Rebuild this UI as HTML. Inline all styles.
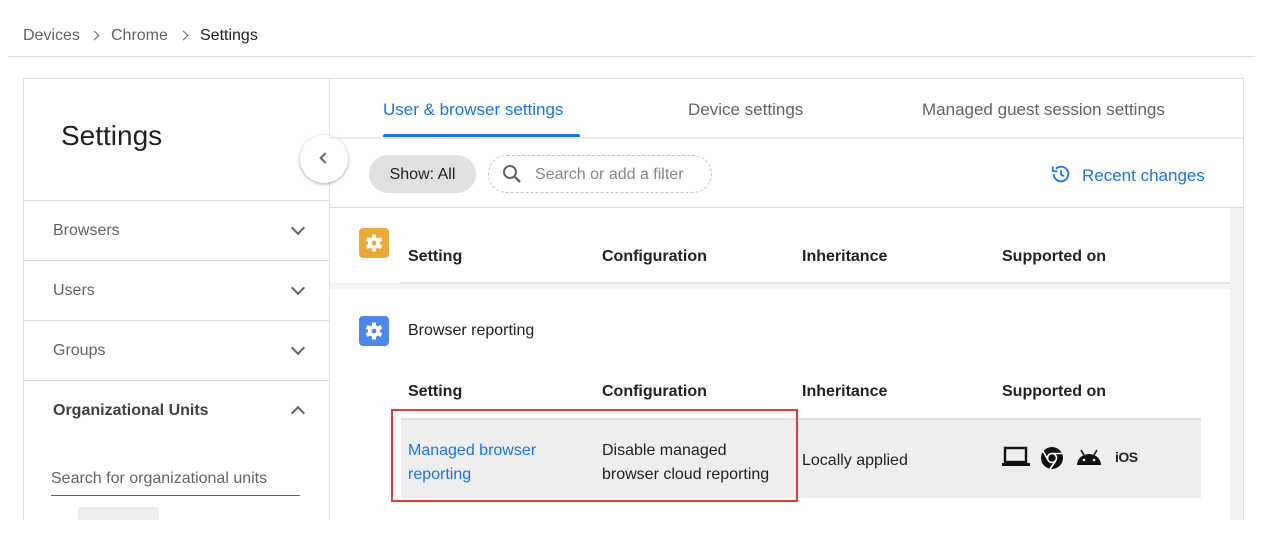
<!DOCTYPE html>
<html><head><style>
*{margin:0;padding:0;box-sizing:border-box}
body{width:1266px;height:542px;background:#fff;font-family:"Liberation Sans",Roboto,sans-serif;color:#202124;position:relative;overflow:hidden}
.a{position:absolute;white-space:nowrap}
.g{color:#5f6368}
.b{font-weight:bold;font-size:16px}
.chev{position:absolute;width:10px;height:10px;border-right:2px solid #5f6368;border-bottom:2px solid #5f6368;transform:rotate(45deg)}
.bc{position:absolute;width:7px;height:7px;border-right:1.5px solid #5f6368;border-bottom:1.5px solid #5f6368;transform:rotate(-45deg)}
</style></head><body>
<div class="a g" style="left:23px;top:27px;font-size:16px">Devices</div>
<div class="bc" style="left:91px;top:32px"></div>
<div class="a g" style="left:111px;top:27px;font-size:16px">Chrome</div>
<div class="bc" style="left:180px;top:32px"></div>
<div class="a" style="left:200px;top:27px;font-size:16px">Settings</div>
<div class="a" style="left:8px;top:56px;width:1247px;height:1px;background:#dadce0"></div>
<div class="a" style="left:23px;top:78px;width:1221px;height:442px;border:1px solid #dadce0;border-bottom:none"></div>
<div class="a" style="left:329px;top:78px;width:1px;height:442px;background:#dadce0"></div>
<div class="a" style="left:61px;top:120px;font-size:28px">Settings</div>
<div class="a" style="left:24px;top:200px;width:305px;height:1px;background:#dadce0"></div>
<div class="a" style="left:24px;top:260px;width:305px;height:1px;background:#dadce0"></div>
<div class="a" style="left:24px;top:320px;width:305px;height:1px;background:#dadce0"></div>
<div class="a" style="left:24px;top:380px;width:305px;height:1px;background:#dadce0"></div>
<div class="a g" style="left:53px;top:222px;font-size:16px">Browsers</div>
<div class="a g" style="left:53px;top:282px;font-size:16px">Users</div>
<div class="a g" style="left:53px;top:342px;font-size:16px">Groups</div>
<div class="a" style="left:53px;top:402px;font-size:16px;color:#3c4043;font-weight:bold">Organizational Units</div>
<div class="chev" style="left:293px;top:223px"></div>
<div class="chev" style="left:293px;top:283px"></div>
<div class="chev" style="left:293px;top:343px"></div>
<div class="chev" style="left:293px;top:408px;transform:rotate(225deg)"></div>
<div class="a g" style="left:51px;top:470px;font-size:16px">Search for organizational units</div>
<div class="a" style="left:51px;top:495px;width:249px;height:1px;background:#5f6368"></div>
<div class="a" style="left:78px;top:507px;width:81px;height:13px;background:#eee;border-radius:3px 3px 0 0"></div>
<div class="a" style="left:300px;top:135px;width:48px;height:48px;border-radius:50%;background:#fff;box-shadow:0 1px 3px rgba(0,0,0,.35)"></div>
<div class="chev" style="left:321px;top:154px;transform:rotate(135deg);width:8px;height:8px"></div>
<div class="a" style="left:383px;top:100px;font-size:17px;color:#1a73e8">User &amp; browser settings</div>
<div class="a g" style="left:688px;top:100px;font-size:17px">Device settings</div>
<div class="a g" style="left:922px;top:100px;font-size:17px">Managed guest session settings</div>
<div class="a" style="left:330px;top:137px;width:913px;height:2px;background:#e8eaed"></div>
<div class="a" style="left:383px;top:134px;width:197px;height:3px;background:#1a73e8;border-radius:2px 2px 0 0"></div>
<div class="a" style="left:369px;top:155px;width:107px;height:38px;border-radius:19px;background:#e0e0e0;font-size:16px;line-height:39px;text-align:center">Show: All</div>
<div class="a" style="left:488px;top:155px;width:224px;height:38px;border-radius:19px;border:1px dashed #bdc1c6"></div>
<svg class="a" style="left:500px;top:162px" width="24" height="24" viewBox="0 0 24 24"><circle cx="10" cy="10" r="6" fill="none" stroke="#5f6368" stroke-width="2"/><path d="M14.5 14.5L20 20" stroke="#5f6368" stroke-width="2.4"/></svg>
<div class="a g" style="left:535px;top:166px;font-size:16px;color:#80868b">Search or add a filter</div>
<svg class="a" style="left:1050px;top:163px" width="22" height="22" viewBox="0 0 24 24"><path d="M4 12a8 8 0 1 0 2.5-5.8" fill="none" stroke="#1a73e8" stroke-width="2"/><path d="M3 4v5h5" fill="none" stroke="#1a73e8" stroke-width="2"/><path d="M12 8v4.5l3 2" fill="none" stroke="#1a73e8" stroke-width="2"/></svg>
<div class="a" style="left:1082px;top:166px;font-size:17px;color:#1a73e8">Recent changes</div>
<div class="a" style="left:330px;top:207px;width:913px;height:1px;background:#dadce0"></div>
<div class="a" style="left:1230px;top:208px;width:13px;height:312px;background:#f1f1f1"></div>
<div class="a" style="left:330px;top:283px;width:900px;height:6px;background:#f4f4f4"></div>
<div class="a" style="left:400px;top:282px;width:830px;height:2px;background:#e0e0e0"></div>
<svg class="a" style="left:359px;top:228px" width="30" height="30" viewBox="0 0 30 30"><rect width="30" height="30" rx="4" fill="#eba93a"/><g fill="#fff" transform="translate(15 15)"><circle r="6"/><rect x="-2" y="-8.5" width="4" height="17"/><rect x="-2" y="-8.5" width="4" height="17" transform="rotate(60)"/><rect x="-2" y="-8.5" width="4" height="17" transform="rotate(120)"/></g><circle cx="15" cy="15" r="2.4" fill="#eba93a"/></svg>
<svg class="a" style="left:359px;top:316px" width="30" height="30" viewBox="0 0 30 30"><rect width="30" height="30" rx="4" fill="#4f86ec"/><g fill="#fff" transform="translate(15 15)"><circle r="6"/><rect x="-2" y="-8.5" width="4" height="17"/><rect x="-2" y="-8.5" width="4" height="17" transform="rotate(60)"/><rect x="-2" y="-8.5" width="4" height="17" transform="rotate(120)"/></g><circle cx="15" cy="15" r="2.4" fill="#4f86ec"/></svg>
<div class="a b" style="left:408px;top:248px">Setting</div>
<div class="a b" style="left:602px;top:248px">Configuration</div>
<div class="a b" style="left:802px;top:248px">Inheritance</div>
<div class="a b" style="left:1002px;top:248px">Supported on</div>
<div class="a" style="left:408px;top:322px;font-size:16px">Browser reporting</div>
<div class="a b" style="left:408px;top:383px">Setting</div>
<div class="a b" style="left:602px;top:383px">Configuration</div>
<div class="a b" style="left:802px;top:383px">Inheritance</div>
<div class="a b" style="left:1002px;top:383px">Supported on</div>
<div class="a" style="left:401px;top:418px;width:800px;height:80px;background:#eeeeee;border-top:2px solid #e0e0e0"></div>
<div class="a" style="left:391px;top:409px;width:407px;height:93px;border:2px solid #e53935"></div>
<div class="a" style="left:408px;top:439px;font-size:16px;line-height:24px;color:#1a73e8">Managed browser<br>reporting</div>
<div class="a" style="left:602px;top:439px;font-size:16px;line-height:24px">Disable managed<br>browser cloud reporting</div>
<div class="a" style="left:802px;top:452px;font-size:16px">Locally applied</div>
<svg class="a" style="left:1002px;top:446px" width="28" height="22" viewBox="0 0 28 22"><rect x="3" y="2" width="21" height="14" fill="none" stroke="#111" stroke-width="2.4"/><rect x="0" y="17" width="28" height="3" fill="#111"/></svg>
<svg class="a" style="left:1040px;top:446px" width="24" height="24" viewBox="0 0 24 24"><circle cx="12" cy="12" r="11" fill="#111"/><circle cx="12" cy="12" r="4.5" fill="none" stroke="#fff" stroke-width="1.6"/><path d="M12 7.5H22M8 14L3 5M15.5 15L10 23" stroke="#fff" stroke-width="1.6"/></svg>
<svg class="a" style="left:1076px;top:447px" width="26" height="20" viewBox="0 0 26 20"><path d="M1 18a12 11 0 0 1 24 0z" fill="#111"/><path d="M5 3l3 5M21 3l-3 5" stroke="#111" stroke-width="1.6"/><circle cx="8" cy="13" r="1.3" fill="#eee"/><circle cx="18" cy="13" r="1.3" fill="#eee"/></svg>
<div class="a" style="left:1115px;top:449px;font-size:14px;font-weight:bold;letter-spacing:-0.5px">iOS</div>
</body></html>
